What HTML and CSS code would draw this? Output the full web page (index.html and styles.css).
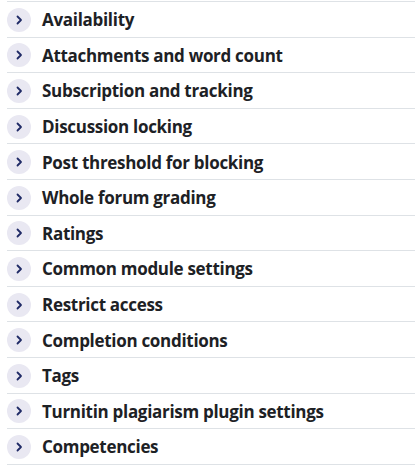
FILE: index.html
```html
<!DOCTYPE html>
<html>
<head>
<meta charset="utf-8">
<link rel="stylesheet" href="styles.css">
</head>
<body>
<div class="list">
  <div class="row"><span class="toggle"><svg viewBox="0 0 24 24" width="24" height="24"><path d="M10.5 8.5 L14 12 L10.5 15.5" fill="none" stroke="#1f2a66" stroke-width="1.8" stroke-linecap="round" stroke-linejoin="round"/></svg></span><span class="label">Availability</span></div>
  <div class="row"><span class="toggle"><svg viewBox="0 0 24 24" width="24" height="24"><path d="M10.5 8.5 L14 12 L10.5 15.5" fill="none" stroke="#1f2a66" stroke-width="1.8" stroke-linecap="round" stroke-linejoin="round"/></svg></span><span class="label">Attachments and word count</span></div>
  <div class="row"><span class="toggle"><svg viewBox="0 0 24 24" width="24" height="24"><path d="M10.5 8.5 L14 12 L10.5 15.5" fill="none" stroke="#1f2a66" stroke-width="1.8" stroke-linecap="round" stroke-linejoin="round"/></svg></span><span class="label">Subscription and tracking</span></div>
  <div class="row"><span class="toggle"><svg viewBox="0 0 24 24" width="24" height="24"><path d="M10.5 8.5 L14 12 L10.5 15.5" fill="none" stroke="#1f2a66" stroke-width="1.8" stroke-linecap="round" stroke-linejoin="round"/></svg></span><span class="label">Discussion locking</span></div>
  <div class="row"><span class="toggle"><svg viewBox="0 0 24 24" width="24" height="24"><path d="M10.5 8.5 L14 12 L10.5 15.5" fill="none" stroke="#1f2a66" stroke-width="1.8" stroke-linecap="round" stroke-linejoin="round"/></svg></span><span class="label">Post threshold for blocking</span></div>
  <div class="row"><span class="toggle"><svg viewBox="0 0 24 24" width="24" height="24"><path d="M10.5 8.5 L14 12 L10.5 15.5" fill="none" stroke="#1f2a66" stroke-width="1.8" stroke-linecap="round" stroke-linejoin="round"/></svg></span><span class="label">Whole forum grading</span></div>
  <div class="row"><span class="toggle"><svg viewBox="0 0 24 24" width="24" height="24"><path d="M10.5 8.5 L14 12 L10.5 15.5" fill="none" stroke="#1f2a66" stroke-width="1.8" stroke-linecap="round" stroke-linejoin="round"/></svg></span><span class="label">Ratings</span></div>
  <div class="row"><span class="toggle"><svg viewBox="0 0 24 24" width="24" height="24"><path d="M10.5 8.5 L14 12 L10.5 15.5" fill="none" stroke="#1f2a66" stroke-width="1.8" stroke-linecap="round" stroke-linejoin="round"/></svg></span><span class="label">Common module settings</span></div>
  <div class="row"><span class="toggle"><svg viewBox="0 0 24 24" width="24" height="24"><path d="M10.5 8.5 L14 12 L10.5 15.5" fill="none" stroke="#1f2a66" stroke-width="1.8" stroke-linecap="round" stroke-linejoin="round"/></svg></span><span class="label">Restrict access</span></div>
  <div class="row"><span class="toggle"><svg viewBox="0 0 24 24" width="24" height="24"><path d="M10.5 8.5 L14 12 L10.5 15.5" fill="none" stroke="#1f2a66" stroke-width="1.8" stroke-linecap="round" stroke-linejoin="round"/></svg></span><span class="label">Completion conditions</span></div>
  <div class="row"><span class="toggle"><svg viewBox="0 0 24 24" width="24" height="24"><path d="M10.5 8.5 L14 12 L10.5 15.5" fill="none" stroke="#1f2a66" stroke-width="1.8" stroke-linecap="round" stroke-linejoin="round"/></svg></span><span class="label">Tags</span></div>
  <div class="row"><span class="toggle"><svg viewBox="0 0 24 24" width="24" height="24"><path d="M10.5 8.5 L14 12 L10.5 15.5" fill="none" stroke="#1f2a66" stroke-width="1.8" stroke-linecap="round" stroke-linejoin="round"/></svg></span><span class="label">Turnitin plagiarism plugin settings</span></div>
  <div class="row"><span class="toggle"><svg viewBox="0 0 24 24" width="24" height="24"><path d="M10.5 8.5 L14 12 L10.5 15.5" fill="none" stroke="#1f2a66" stroke-width="1.8" stroke-linecap="round" stroke-linejoin="round"/></svg></span><span class="label">Competencies</span></div>
</div>
</body>
</html>
```
FILE: styles.css
```css
html, body {
  margin: 0;
  padding: 0;
  background: #fff;
}
body {
  padding-top: 1px;
  padding-left: 7px;
  font-family: "Open Sans", "Noto Sans", sans-serif;
  color: #1d2125;
}
.list {
  display: flex;
  flex-direction: column;
  border-bottom: 1px solid #dee2e6;
}
.row {
  display: flex;
  align-items: center;
  height: 35.6px;
  box-sizing: border-box;
  border-top: 1px solid #dee2e6;
}
.toggle {
  width: 24px;
  height: 24px;
  border-radius: 50%;
  background: #e9e8f2;
  display: flex;
  align-items: center;
  justify-content: center;
  flex: none;
  margin-top: 1px;
}
.toggle svg {
  display: block;
}
.label {
  margin-left: 11px;
  padding-top: 1px;
  font-weight: 700;
  font-size: 17px;
  letter-spacing: -0.3px;
}
```
